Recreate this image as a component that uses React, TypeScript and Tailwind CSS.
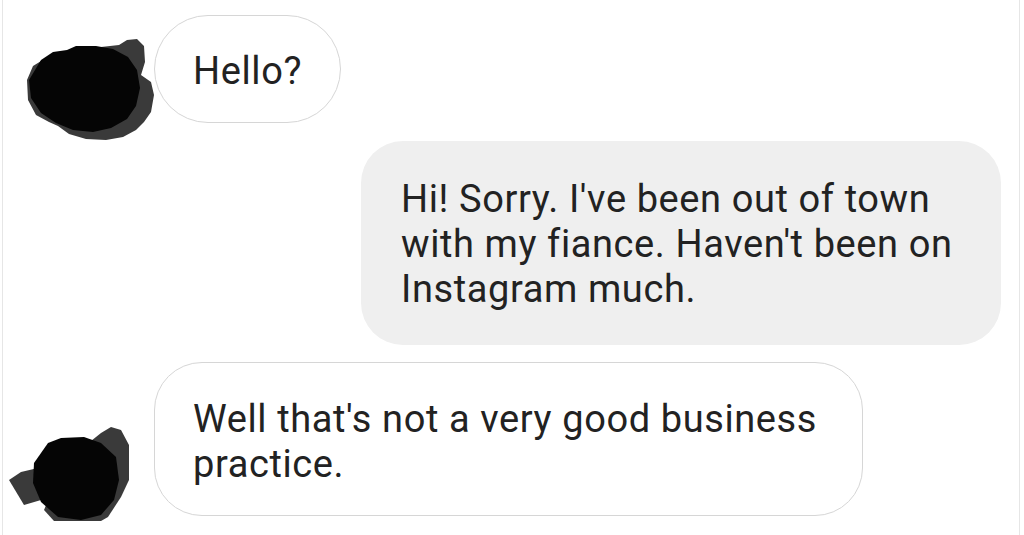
import React from 'react';

// scribbled-out avatars, drawn in page coordinates
function AvatarTop() {
  return (
    <svg width={151} height={108} viewBox="2 15 151 108" overflow="visible" className="shrink-0 overflow-visible">
      <polygon
        fill="#3a3a3a"
        points="118,45 126,40 136,39 143,46 144,62 140,75 150,82 153,95 150,112 143,122 135,130 122,137 105,140 85,139 68,134 57,126 48,122 35,115 27,100 26,80 32,66 45,58 60,52 80,48 100,47"
      />
      <polygon
        fill="#050505"
        points="40,60 52,52 66,50 75,46 95,46 112,49 127,57 136,70 139,88 135,106 126,119 110,128 92,132 72,130 55,123 40,113 30,98 28,80"
      />
    </svg>
  );
}

function AvatarBottom() {
  return (
    <svg width={151} height={154} viewBox="2 362 151 154" overflow="visible" className="shrink-0 overflow-visible">
      <polygon fill="#3a3a3a" points="8,480 20,472 37,468 40,500 23,505" />
      <polygon
        fill="#3a3a3a"
        points="100,433 110,427 120,430 128,445 128,480 120,497 107,517 100,521 53,521 43,510 60,470 85,445"
      />
      <polygon
        fill="#050505"
        points="47,443 60,438 83,437 100,443 115,457 118,480 113,500 100,515 80,520 57,517 40,502 32,483 33,463"
      />
    </svg>
  );
}

export default function App() {
  const font = { fontFamily: 'Roboto, "Noto Sans", sans-serif' };

  return (
    <div className="w-full h-[535px] bg-white overflow-hidden" style={font}>
      <div className="ml-[2px] w-[1018px] h-full border-x border-[#e6e6e6] flex flex-col pt-[15px] gap-[18px] text-[38px] leading-[45px] tracking-[0.6px] text-[#222222]">
        {/* incoming */}
        <div className="flex items-start">
          <AvatarTop />
          <div className="w-[187px] h-[108px] rounded-full border-[1.5px] border-[#d6d6d6] bg-white pl-[38px] pt-[33px] whitespace-nowrap">
            Hello?
          </div>
        </div>

        {/* outgoing */}
        <div className="flex justify-end pr-[18px]">
          <div className="w-[640px] h-[204px] rounded-[42px] bg-[#efefef] pl-[40px] pt-[36px] whitespace-nowrap">
            Hi! Sorry. I've been out of town
            <br />
            with my fiance. Haven't been on
            <br />
            Instagram much.
          </div>
        </div>

        {/* incoming */}
        <div className="flex items-start -mt-[1px]">
          <AvatarBottom />
          <div className="w-[709px] h-[154px] rounded-[48px] border-[1.5px] border-[#d6d6d6] bg-white pl-[38px] pt-[34px] whitespace-nowrap">
            Well that's not a very good business
            <br />
            practice.
          </div>
        </div>
      </div>
    </div>
  );
}
